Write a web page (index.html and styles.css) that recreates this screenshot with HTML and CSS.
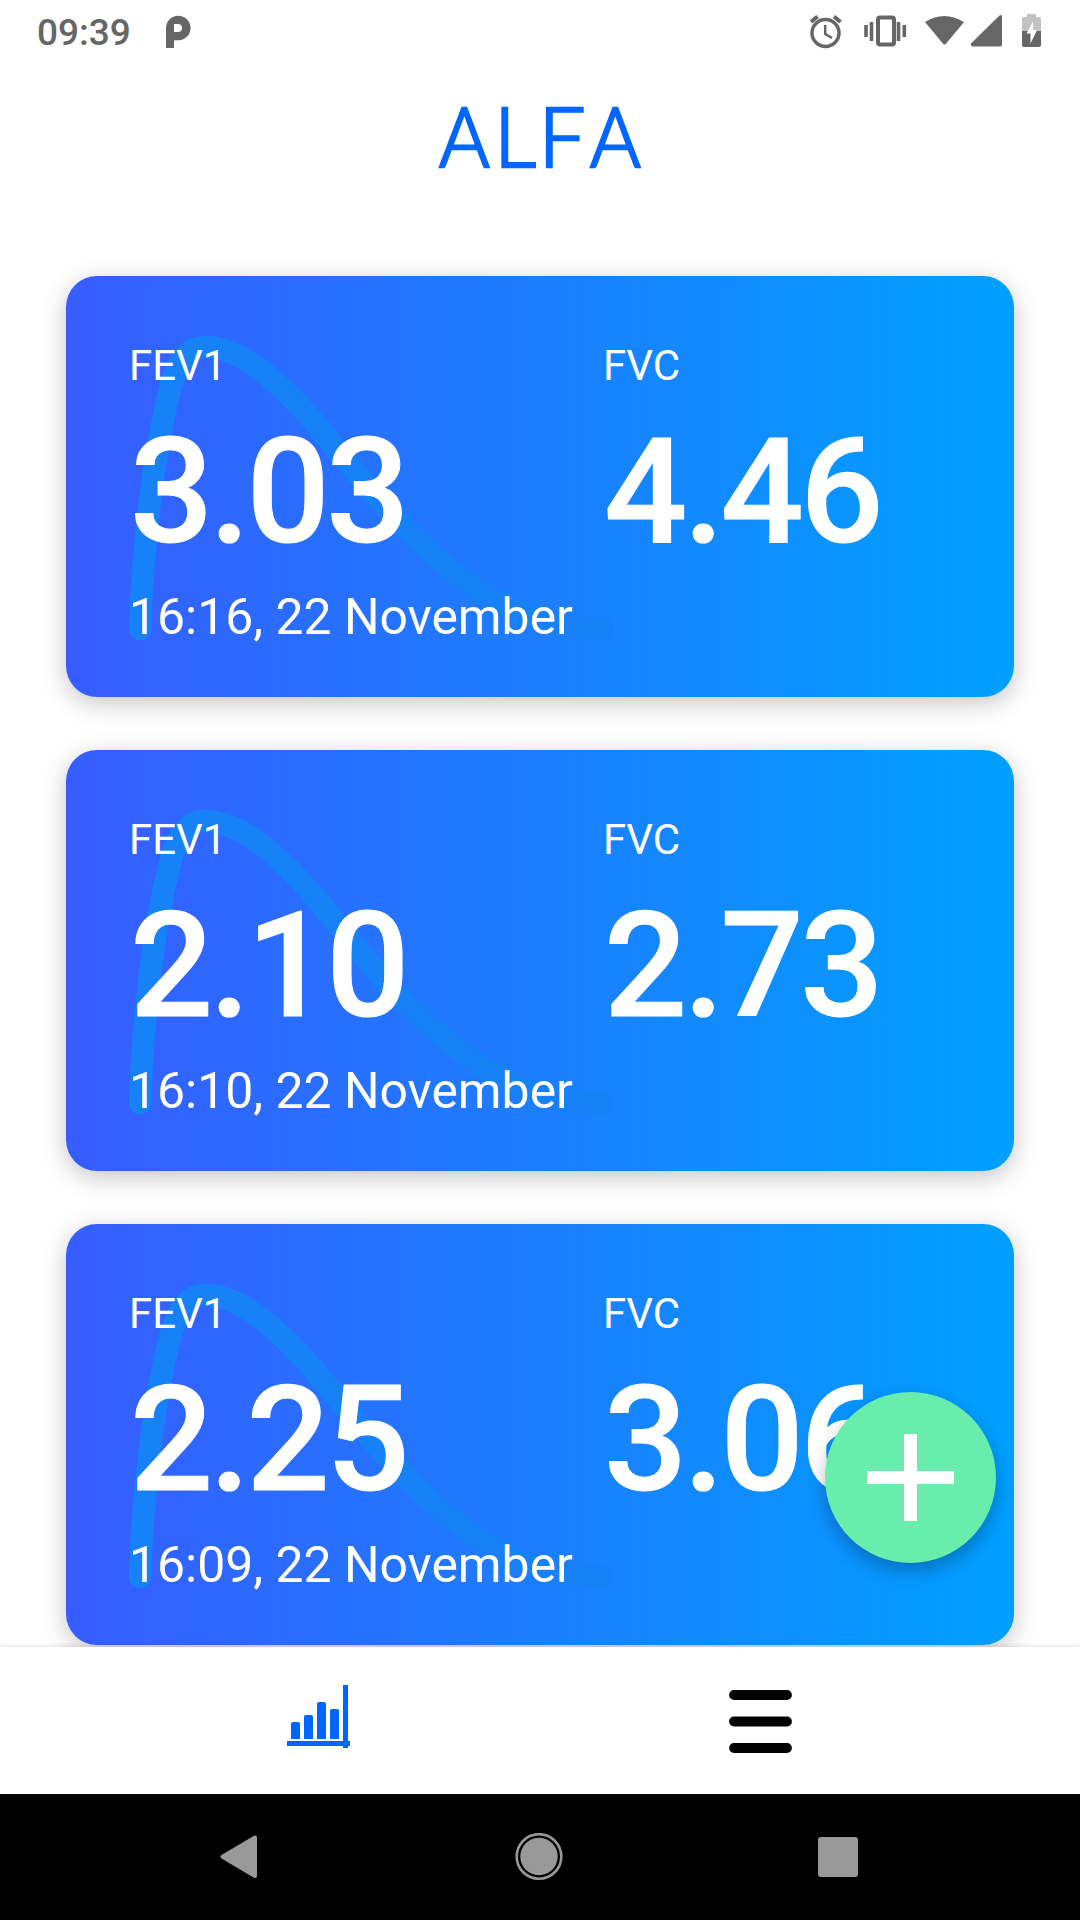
FILE: index.html
```html
<!DOCTYPE html>
<html lang="en">
<head>
<meta charset="utf-8">
<title>ALFA</title>
<link rel="stylesheet" href="styles.css">
</head>
<body>
<svg class="defs" width="0" height="0" aria-hidden="true">
  <symbol id="curve" viewBox="0 0 948 421">
    <path d="M74 353C76 290 84 210 95 154C105 104 112 71 139 71C174 71 209 103 242 139C274 176 302 214 338 251C378 290 440 353 537 353" fill="none" stroke="#1781f8" stroke-width="22.500" stroke-linecap="round"/>
  </symbol>
</svg>
<div class="screen">
  <header class="status">
    <span class="time">09:39</span>
    <svg class="p-icon" width="26" height="34" viewBox="0 0 26 34"><path fill="#666" fill-rule="evenodd" d="M1 33V13A12.3 12.3 0 1 1 13.500 25.300H9V33ZM9 9V17H13A4 4 0 0 0 13 9Z"/></svg>
    <svg class="status-icons" width="240" height="38" viewBox="0 0 240 38">
      <g fill="none" stroke="#666">
        <circle cx="15.500" cy="21" r="13.500" stroke-width="3.500"/>
        <path d="M15.200 13V22L22 26" stroke-width="2.500"/>
        <path d="M1 10L7.500 4.500M24 4.500L30.500 10" stroke-width="4"/>
        <rect x="68" y="5.500" width="16" height="27" rx="2" stroke-width="4"/>
        <path d="M56 13V25M61.500 10V29M88.500 10V29M94.300 13V25" stroke-width="3.600"/>
      </g>
      <path fill="#666" d="M115 10Q134 -2 154 10L135.700 32Q134.500 33 133.300 32ZM161 33Q160 32 162 30.500L189 4Q191.500 2 192 4.500V33Q192 34.500 190 34.500H162Z"/>
      <path fill="#c2c2c2" d="M212 19V6.500Q212 5 214 5H217V2H226V5H229Q231 5 231 6.500V19Z"/>
      <path fill="#666" d="M212 19H231V33Q231 35 229 35H214Q212 35 212 33Z"/>
      <path fill="#fff" d="M223 9.500L216.500 21.500H220.500V31.500L227 18H223Z"/>
    </svg>
  </header>
  <h1 class="brand"><span class="narrow">A</span>LF<span class="narrow">A</span></h1>
  <main class="list">
    <article class="card">
      <svg class="curve"><use href="#curve"/></svg>
      <div class="metrics">
        <div class="metric"><div class="label">FEV1</div><div class="value">3.03</div></div>
        <div class="metric"><div class="label">FVC</div><div class="value">4.46</div></div>
      </div>
      <div class="date">16:16, 22 November</div>
    </article>
    <article class="card">
      <svg class="curve"><use href="#curve"/></svg>
      <div class="metrics">
        <div class="metric"><div class="label">FEV1</div><div class="value">2.10</div></div>
        <div class="metric"><div class="label">FVC</div><div class="value">2.73</div></div>
      </div>
      <div class="date">16:10, 22 November</div>
    </article>
    <article class="card">
      <svg class="curve"><use href="#curve"/></svg>
      <div class="metrics">
        <div class="metric"><div class="label">FEV1</div><div class="value">2.25</div></div>
        <div class="metric"><div class="label">FVC</div><div class="value">3.06</div></div>
      </div>
      <div class="date">16:09, 22 November</div>
    </article>
    <button class="fab" aria-label="Add"><svg width="88" height="88" viewBox="0 0 88 88"><path d="M43.500 0V87M0 43.500H87" stroke="#fff" stroke-width="13"/></svg></button>
  </main>
  <nav class="tabs">
    <a class="tab"><svg width="64" height="64" viewBox="0 0 64 64" fill="#0066ff"><path d="M4 54V39Q4 37 6 37H11Q13 37 13 39V54ZM17 54V32Q17 30 19 30H24Q26 30 26 32V54ZM30 54V19Q30 17 32 17H37Q39 17 39 19V54ZM43 54V26Q43 24 45 24H50Q52 24 52 26V54Z"/><path d="M56 0H61V63H56ZM0 56H63V61H0Z"/></svg></a>
    <a class="tab menu"><svg width="64" height="64" viewBox="0 0 64 64"><path d="M5 5H58M5 31.500H58M5 58H58" stroke="#000" stroke-width="9.800" stroke-linecap="round"/></svg></a>
  </nav>
  <footer class="system">
    <svg width="38" height="44" viewBox="0 0 38 44"><path d="M35 2.500V41L2.500 21.700Z" fill="#999" stroke="#999" stroke-width="4" stroke-linejoin="round"/></svg>
    <svg width="50" height="48" viewBox="0 0 50 48"><circle cx="26" cy="23.500" r="22.300" fill="none" stroke="#999" stroke-width="2.600"/><circle cx="26" cy="23.500" r="18.700" fill="#999"/></svg>
    <svg width="40" height="40" viewBox="0 0 40 40"><rect width="40" height="40" rx="3" fill="#999"/></svg>
  </footer>
</div>
</body>
</html>
```
FILE: styles.css
```css
* { box-sizing: border-box; }
body { margin: 0; background: #fff; font-family: Roboto, sans-serif; }
.defs { position: absolute; }
.screen { width: 1080px; height: 1920px; display: flex; flex-direction: column; overflow: hidden; }

.status { height: 72px; flex: none; display: flex; align-items: flex-start; padding: 0 30px 0 37px; color: #666; }
.time { width: 128px; font-size: 37px; font-weight: 500; line-height: 42px; padding-top: 12px; }
.p-icon { margin-top: 15px; }
.status-icons { margin: 12px 0 0 auto; }

.brand { margin: 0; height: 204px; flex: none; padding: 12px 0 0 2px; text-align: center; font: 300 83px/102px Lato, sans-serif; letter-spacing: 2.5px; font-kerning: none; color: #0066ff; -webkit-text-stroke: 2.6px #0066ff; }
.narrow { display: inline-block; transform: scaleX(.93); }

.list { position: relative; height: 1371px; flex: none; padding: 0 66px; display: flex; flex-direction: column; gap: 53px; }
.card { position: relative; height: 421px; flex: none; border-radius: 31px; padding-top: 65px; color: #fff; background: linear-gradient(90deg, #375cff, #00a0ff); box-shadow: 0 6px 24px rgba(0, 0, 0, .23); }
.curve { position: absolute; inset: 0; width: 948px; height: 421px; }
.metrics { position: relative; display: grid; grid-template-columns: 1fr 1fr; }
.metric { padding-left: 63px; }
.label { font-size: 42px; line-height: 50px; }
.value { font-size: 146.5px; font-weight: 500; line-height: 174px; margin: 14px 0 0 1px; letter-spacing: -3.7px; -webkit-text-stroke: 1px #fff; }
.date { position: relative; padding-left: 63px; font-size: 49.9px; line-height: 60px; margin-top: 8px; }

.fab { position: absolute; left: 825px; top: 1116px; width: 171px; height: 171px; padding: 0; border: 0; border-radius: 50%; background: #69edac; display: flex; align-items: center; justify-content: center; box-shadow: 0 8px 18px rgba(0, 0, 0, .26); }

.tabs { position: relative; height: 147px; flex: none; display: grid; grid-template-columns: 1fr 1fr; padding: 38px 98px 0; background: #fff; box-shadow: 0 0 5px rgba(0, 0, 0, .18); }
.tab { display: flex; justify-content: center; }
.menu { padding-top: 5px; }

.system { position: relative; height: 126px; flex: none; display: flex; justify-content: space-between; align-items: center; padding: 0 222px 0 220px; background: #000; }
```
